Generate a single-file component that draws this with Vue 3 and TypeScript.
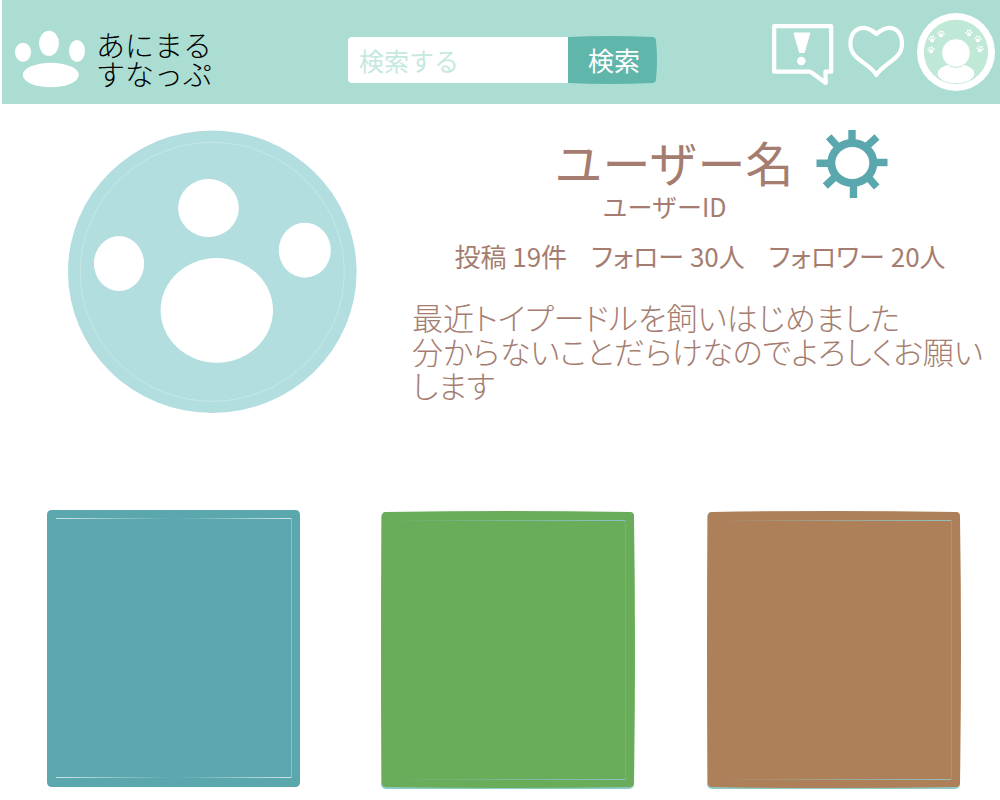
<script setup lang="ts">
import { ref } from 'vue'

interface Post {
  id: number
  label: string
  fill: string
  edge: string
  shine: string
  shape: string
  top: number
  fade: [number, number, number]
}

const keyword = ref('')

const stats: string[] = ['投稿 19件', 'フォロー 30人', 'フォロワー 20人']

const flat = 'M5 0 H248 Q253 0 253 5 V272 Q253 277 248 277 H5 Q0 277 0 272 V5 Q0 0 5 0 Z'
const bulged =
  'M5 2 Q126 0 249 2 Q253 2 253 6 Q255 138 253 273 Q253 277 249 277 Q126 279 5 277 Q1 277 1 273 Q-1 138 1 6 Q1 2 5 2 Z'

const posts: Post[] = [
  { id: 1, label: '投稿 1', fill: '#5ba7ae', edge: '#5ba7ae', shine: '#ffffff', shape: flat, top: 8, fade: [0.7, 0, 0.7] },
  { id: 2, label: '投稿 2', fill: '#69ad5b', edge: '#8fcbc6', shine: '#8fc3d0', shape: bulged, top: 10, fade: [0, 0.5, 0.9] },
  { id: 3, label: '投稿 3', fill: '#ad8059', edge: '#8fcbc6', shine: '#8fc8cc', shape: bulged, top: 10, fade: [0, 0.5, 0.9] },
]

const paws = [
  { x: 932, y: 50, r: -10 },
  { x: 933, y: 39, r: -5 },
  { x: 942, y: 34, r: 8 },
  { x: 970, y: 33, r: -8 },
  { x: 979, y: 39, r: 5 },
  { x: 981, y: 49, r: 10 },
]
</script>

<template>
  <div class="page">
    <header class="bar">
      <a class="brand" href="#">
        <svg width="80" height="62" viewBox="10 28 80 62" fill="#fff" aria-hidden="true">
          <ellipse cx="23" cy="52.3" rx="8" ry="9.6" />
          <ellipse cx="49" cy="43.3" rx="10" ry="12.5" />
          <ellipse cx="77" cy="51" rx="8" ry="11" />
          <ellipse cx="50.8" cy="75" rx="28" ry="12.3" />
        </svg>
        <span class="brand-name">あにまる<br />すなっぷ</span>
      </a>

      <form class="search" @submit.prevent>
        <input v-model="keyword" type="text" aria-label="検索する" placeholder="検索する" />
        <button type="submit">
          <svg class="search-shape" viewBox="0 0 89 48" preserveAspectRatio="none" aria-hidden="true">
            <path d="M0 1 Q44 -1 84 1 Q88 1 88 5 Q90 24 88 43 Q88 47 84 47 Q44 49 0 47 Z" fill="#61b6ab" />
          </svg>
          <span>検索</span>
        </button>
      </form>

      <nav class="actions">
        <a href="#" aria-label="お知らせ">
          <svg width="64" height="78" viewBox="771 13 64 78" aria-hidden="true">
            <path
              d="M811 71.7 H774.2 V26.2 H831.2 V71.7 H825.4 L825.8 83 L810.5 71.7"
              fill="none"
              stroke="#fff"
              stroke-width="4.2"
              stroke-linejoin="round"
            />
            <path d="M794 33 H809.8 L804.3 52.5 H799.5 Z" fill="#fff" stroke="#fff" stroke-linejoin="round" />
            <circle cx="801.3" cy="61" r="4.3" fill="#fff" />
          </svg>
        </a>
        <a href="#" aria-label="いいね">
          <svg width="58" height="78" viewBox="848 13 58 78" aria-hidden="true">
            <path
              d="M877.4 34 C873 30 869 27.6 864 27.8 C856 28 851.4 35 851.4 44 C851.4 60 871 63 877.4 75 C884 63 903 60 903 44 C903 35 898.5 28 890.5 27.8 C885.5 27.6 882 30 877.4 34 Z"
              fill="none"
              stroke="#fff"
              stroke-width="4.2"
              stroke-linejoin="round"
            />
          </svg>
        </a>
        <a href="#" aria-label="マイページ">
          <svg width="78" height="78" viewBox="918 13 78 78" aria-hidden="true">
            <circle cx="957" cy="52" r="39" fill="#fff" />
            <circle cx="957" cy="52" r="32.2" fill="#bfe8d6" />
            <ellipse cx="957" cy="73.6" rx="18.3" ry="9.6" fill="#fff" />
            <circle cx="957" cy="53" r="14.4" fill="#fff" stroke="#bfe8d6" />
            <g v-for="p in paws" :key="p.x" :transform="`translate(${p.x} ${p.y}) rotate(${p.r})`" fill="#fff">
              <ellipse cy="1.4" rx="2.2" ry="1.8" />
              <circle cx="-2.8" cy="-0.4" r="0.9" />
              <circle cx="-1" cy="-2.3" r="1" />
              <circle cx="1.3" cy="-2.3" r="1" />
              <circle cx="2.9" cy="-0.3" r="0.9" />
            </g>
          </svg>
        </a>
      </nav>
    </header>

    <main>
      <section class="profile">
        <svg class="portrait" viewBox="68 130 289 283" role="img" aria-label="プロフィール画像">
          <ellipse cx="212.3" cy="271.8" rx="144.3" ry="141.2" fill="#b2dedf" />
          <ellipse cx="212.3" cy="271.8" rx="132" ry="129.5" fill="none" stroke="#d3eded" stroke-width="0.6" />
          <g fill="#fff">
            <ellipse cx="208.5" cy="208" rx="30.4" ry="29" />
            <ellipse cx="119" cy="263.6" rx="25.1" ry="27.5" />
            <ellipse cx="304.8" cy="250.2" rx="26" ry="27.5" />
            <ellipse cx="216.8" cy="310.3" rx="56.2" ry="52.4" />
          </g>
        </svg>

        <div class="details">
          <div class="identity">
            <div>
              <h1>ユーザー名</h1>
              <p class="user-id">ユーザーID</p>
            </div>
            <button class="settings" type="button" aria-label="設定">
              <svg width="72" height="70" viewBox="0 0 72 70" fill="none" stroke="#5ba7ae" aria-hidden="true">
                <ellipse cx="36.3" cy="33" rx="21" ry="20" stroke-width="8" />
                <path
                  d="M36 0 V12 M37.5 56 V68 M0.5 33.2 H14 M58 32.5 H71.5 M12.7 6.8 L22 17 M61 7 L50 17 M9.3 56 L21 45 M60.7 57 L51 46"
                  stroke-width="7.4"
                />
              </svg>
            </button>
          </div>
          <ul class="stats">
            <li v-for="s in stats" :key="s">{{ s }}</li>
          </ul>
          <p class="bio">最近トイプードルを飼いはじめました<br />分からないことだらけなのでよろしくお願いします</p>
        </div>
      </section>

      <section class="posts" aria-label="投稿">
        <a v-for="post in posts" :key="post.id" class="post" href="#" :aria-label="post.label">
          <svg viewBox="0 0 254 279" preserveAspectRatio="none" aria-hidden="true">
            <defs>
              <linearGradient :id="`shine-${post.id}`">
                <stop offset="0" :stop-color="post.shine" :stop-opacity="post.fade[0]" />
                <stop offset="0.5" :stop-color="post.shine" :stop-opacity="post.fade[1]" />
                <stop offset="1" :stop-color="post.shine" :stop-opacity="post.fade[2]" />
              </linearGradient>
            </defs>
            <rect v-if="post.edge !== post.fill" y="2" width="253" height="277" rx="5" :fill="post.edge" />
            <path :d="post.shape" :fill="post.fill" />
            <rect x="9" :y="post.top" width="235" height="1" :fill="`url(#shine-${post.id})`" />
            <rect x="9" :y="post.top + 259" width="235" height="1" :fill="`url(#shine-${post.id})`" />
            <rect x="244" :y="post.top" width="1" height="260" :fill="post.shine" opacity="0.3" />
          </svg>
        </a>
      </section>
    </main>
  </div>
</template>

<style>
body {
  margin: 0;
  background: #fff;
}
</style>

<style scoped>
.page {
  font-family: 'Noto Sans CJK JP', sans-serif;
  font-weight: 300;
  color: #a57d70;
}

.bar {
  display: grid;
  grid-template-columns: 1fr auto 1fr;
  align-items: center;
  min-height: 104px;
  margin-left: 2px;
  padding: 0 5px 0 8px;
  box-sizing: border-box;
  background: #abddd3;
}

.brand {
  display: flex;
  align-items: center;
  gap: 6px;
  padding-top: 14px;
  color: #000;
  text-decoration: none;
}

.brand-name {
  font-size: 29px;
  line-height: 29px;
}

.search {
  display: flex;
  align-items: center;
  padding-top: 16px;
}

.search input {
  width: 220px;
  height: 46px;
  box-sizing: border-box;
  padding: 0 11px;
  border: 0;
  border-radius: 4px 0 0 4px;
  background: #fff;
  color: #61b6ab;
  font: inherit;
  font-size: 25px;
  font-weight: 400;
  outline: none;
}

.search input::placeholder {
  color: #c5e8e1;
  opacity: 1;
}

.search button {
  position: relative;
  width: 89px;
  height: 48px;
  padding: 0 0 0 3px;
  border: 0;
  background: none;
  color: #fff;
  font: inherit;
  font-size: 26px;
  font-weight: 400;
  line-height: 48px;
}

.search-shape {
  position: absolute;
  inset: 0;
  width: 100%;
  height: 100%;
}

.search button span {
  position: relative;
}

.actions {
  display: flex;
  justify-content: flex-end;
  align-items: center;
  gap: 12px;
}

.actions a,
.actions svg,
.post svg {
  display: block;
}

.profile {
  display: grid;
  grid-template-columns: 289fr 588fr;
  column-gap: 55px;
  align-items: start;
  padding: 26px 0 0 68px;
}

.portrait {
  display: block;
  width: 100%;
}

h1,
p,
ul {
  margin: 0;
  padding: 0;
}

.identity {
  display: flex;
  align-items: flex-start;
  justify-content: center;
  gap: 22px;
  padding-left: 30px;
}

h1 {
  font-size: 48px;
  font-weight: 400;
  line-height: 62px;
}

.user-id {
  padding-left: 48px;
  font-size: 25px;
  font-weight: 400;
  line-height: 28px;
}

.settings {
  padding: 0;
  border: 0;
  background: none;
}

.settings svg {
  display: block;
}

.stats {
  display: flex;
  justify-content: center;
  gap: 24px;
  padding: 16px 12px 0 0;
  list-style: none;
  font-size: 26px;
  font-weight: 400;
  line-height: 40px;
  font-feature-settings: 'palt';
  white-space: nowrap;
}

.bio {
  padding: 24px 8px 0 0;
  font-size: 31px;
  line-height: 34px;
  font-feature-settings: 'palt';
}

.posts {
  display: grid;
  grid-template-columns: 254fr 80fr 254fr 72fr 254fr;
  padding: 97px 39px 11px 47px;
}

.post:nth-child(2) {
  grid-column: 3;
}

.post:nth-child(3) {
  grid-column: 5;
}

.post svg {
  width: 100%;
  height: auto;
}
</style>
